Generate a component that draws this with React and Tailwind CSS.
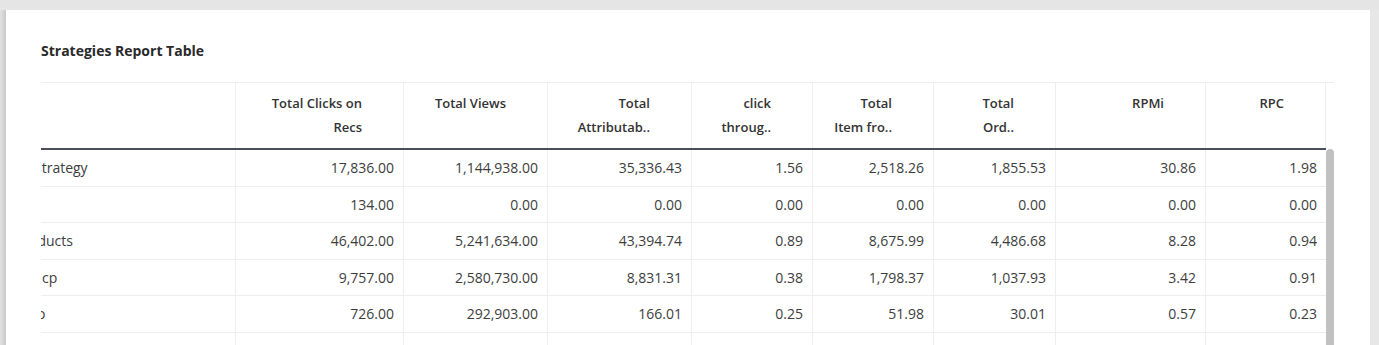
const columns = [
  { key: "name", width: "w-[194px]" },
  { key: "clicks", label: ["Total Clicks on", "Recs"], width: "w-[168px]" },
  { key: "views", label: ["Total Views"], width: "w-[144px]" },
  { key: "attr", label: ["Total", "Attributab.."], width: "w-[144px]" },
  { key: "ctr", label: ["click", "throug.."], width: "w-[121px]" },
  { key: "item", label: ["Total", "Item fro.."], width: "w-[121px]" },
  { key: "ord", label: ["Total", "Ord.."], width: "w-[122px]" },
  { key: "rpmi", label: ["RPMi"], width: "w-[150px]" },
  { key: "rpc", label: ["RPC"], width: "w-[121px]" },
];

const rows = [
  { name: "strategy", shift: "-ml-[6px]", values: ["17,836.00", "1,144,938.00", "35,336.43", "1.56", "2,518.26", "1,855.53", "30.86", "1.98"] },
  { name: "", shift: "", values: ["134.00", "0.00", "0.00", "0.00", "0.00", "0.00", "0.00", "0.00"] },
  { name: "oducts", shift: "-ml-[12px]", values: ["46,402.00", "5,241,634.00", "43,394.74", "0.89", "8,675.99", "4,486.68", "8.28", "0.94"] },
  { name: "cp", shift: "ml-[1px]", values: ["9,757.00", "2,580,730.00", "8,831.31", "0.38", "1,798.37", "1,037.93", "3.42", "0.91"] },
  { name: "o", shift: "-ml-[4px]", values: ["726.00", "292,903.00", "166.01", "0.25", "51.98", "30.01", "0.57", "0.23"] },
  { name: "", shift: "", values: ["1,078.00", "0.00", "0.00", "0.00", "0.00", "0.00", "0.00", "0.00"] },
];

export default function App() {
  return (
    <div className="h-[345px] overflow-hidden bg-[#e5e5e5] pt-[10px] font-['Open_Sans','Liberation_Sans',sans-serif]">
      <div className="flex h-full">
        <div className="w-[6px] bg-linear-to-r from-[#e2e2e2] to-[#c9c9c9]" />
        <div className="w-[1364px] bg-white pl-[35px] pr-[36px] pt-[31px]">
          <h2 className="h-[20px] text-[14px] font-bold leading-[20px] text-[#2a2a2a]">
            Strategies Report Table
          </h2>

          <div className="mt-[21px]">
            <div className="flex border-t border-[#eceef1]">
              {columns.map((col, i) => (
                <div
                  key={col.key}
                  className={`${col.width} h-[65px] shrink-0 border-[#eceef1] ${i > 0 ? "border-l" : ""} ${i === columns.length - 1 ? "border-r" : ""} flex justify-end pr-[41px] pt-[8px]`}
                >
                  {col.label && (
                    <div className="text-right text-[13px] font-semibold leading-[24px] text-[#333]">
                      {col.label.map((l) => (
                        <div key={l}>{l}</div>
                      ))}
                    </div>
                  )}
                </div>
              ))}
              <div className="w-[8px] shrink-0" />
            </div>

            <div className="flex">
              <div className="w-[1285px]">
                <div className="h-[2px] bg-[#4a5059]" />
                {rows.map((row, r) => (
                  <div key={r} className="flex h-[36.5px] border-b border-[#eceef1] text-[14px] text-[#3d3d3d]">
                    <div className="flex w-[194px] shrink-0 items-center overflow-hidden whitespace-nowrap">
                      <span className={row.shift}>{row.name}</span>
                    </div>
                    {row.values.map((v, c) => (
                      <div
                        key={c}
                        className={`${columns[c + 1].width} flex shrink-0 items-center justify-end border-l border-[#eceef1] pr-[9px]`}
                      >
                        {v}
                      </div>
                    ))}
                  </div>
                ))}
              </div>
              <div className="w-[8px] shrink-0 pt-[1px]">
                <div className="h-[220px] rounded-t-[4px] bg-[#c1c1c1]" />
              </div>
            </div>
          </div>
        </div>
        <div className="flex-1 bg-[#e7e7e7]" />
      </div>
    </div>
  );
}
